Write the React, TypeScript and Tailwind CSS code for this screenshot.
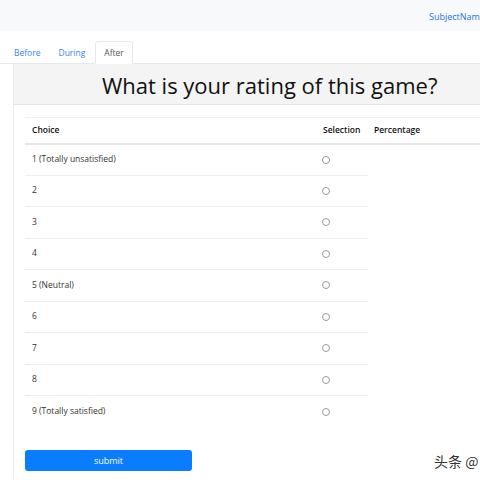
import React from "react";

const choices = [
  "1 (Totally unsatisfied)",
  "2",
  "3",
  "4",
  "5 (Neutral)",
  "6",
  "7",
  "8",
  "9 (Totally satisfied)",
];

export default function App() {
  return (
    <div
      className="w-[480px] h-[480px] overflow-hidden bg-white relative"
      style={{ fontFamily: '"Open Sans", "Noto Sans", "Noto Sans CJK SC", sans-serif' }}
    >
      <div className="h-[31px] bg-[#f8f9fa] flex items-center">
        <span className="ml-[429px] whitespace-nowrap text-[9px] text-[#1a73e8] pt-[2px]">SubjectName</span>
      </div>
      <div className="h-[10px]" />
      <div className="flex items-end h-[23px] border-b border-[#e6e8ea] pl-[5px] w-[490px]">
        <div className="px-[9px] h-[22px] flex items-center pt-[2px] text-[8.5px] text-[#3b82f6]">Before</div>
        <div className="px-[9px] h-[22px] flex items-center pt-[2px] text-[8.5px] text-[#3b82f6]">During</div>
        <div className="ml-[1px] px-[8px] h-[23px] flex items-center pt-[2px] text-[8.5px] text-[#555] border border-[#e6e8ea] border-b-white rounded-t-[3px] bg-white mb-[-1px]">
          After
        </div>
      </div>
      <div className="ml-[13px] w-[500px] border-l border-[#eceeef] h-[420px]">
        <div className="h-[41px] bg-[#f4f4f4] border-b border-[#e3e3e3] flex items-center pl-[88px]">
          <span className="text-[22px] text-[#111] font-medium pt-[2px]">What is your rating of this game?</span>
        </div>
        <div className="pl-[11px] pt-[12px]">
          <table className="border-collapse text-[8.5px] text-[#333]">
            <thead>
              <tr className="border-t border-[#eef0f1] border-b-2 border-b-[#e4e6e8]">
                <th className="w-[291px] h-[26px] text-left font-semibold pl-[7px] text-[#111]">Choice</th>
                <th className="w-[52px] text-left font-semibold pl-[7px] text-[#111]">Selection</th>
                <th className="w-[120px] text-left font-semibold pl-[6px] text-[#111]">Percentage</th>
              </tr>
            </thead>
            <tbody>
              {choices.map((c, i) => (
                <tr key={c} className={i < choices.length - 1 ? "border-b border-[#eceeef]" : ""}>
                  <td className="h-[31.5px] pl-[7px] align-middle">{c}</td>
                  <td className="pl-[7px] align-middle">
                    <span className="block w-[8px] h-[8px] rounded-full border border-[#9a9a9a] ml-[-1px]" />
                  </td>
                  {i === 0 && <td rowSpan={9} className="border-0" />}
                </tr>
              ))}
            </tbody>
          </table>
          <div className="h-[23px]" />
          <button className="w-[167px] h-[21px] bg-[#0a7cff] rounded-[3px] text-white text-[9px] flex items-center justify-center">
            submit
          </button>
        </div>
      </div>
      <div
        className="absolute left-[434px] top-[451px] whitespace-nowrap text-[14px] text-[#333]"
        style={{ fontFamily: '"Noto Sans CJK SC", sans-serif' }}
      >
        头条 @
      </div>
    </div>
  );
}
